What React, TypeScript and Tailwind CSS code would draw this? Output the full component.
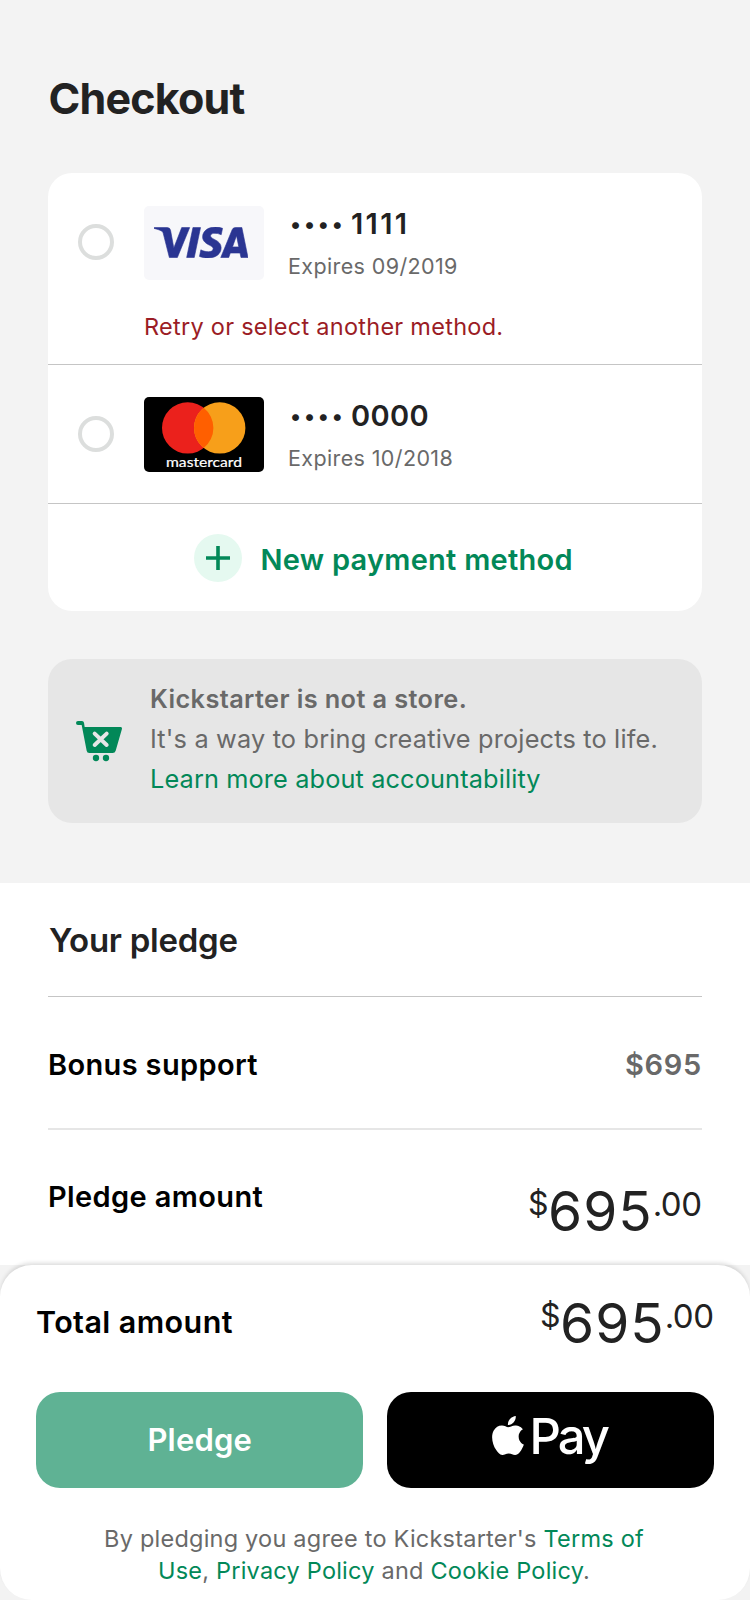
import type { ReactNode } from "react";

function VisaCard() {
  return (
    <div className="flex h-[74px] w-[120px] shrink-0 items-center rounded-[5px] bg-[#f7f7fa] pl-[10px]">
      <svg className="mt-[-1px] h-[31px] w-[94px]" viewBox="0 8.12 24 7.76" preserveAspectRatio="none" fill="#2a3592">
        <path d="M9.112 8.262L5.97 15.758H3.92L2.374 9.775c-.094-.368-.175-.503-.461-.658C1.447 8.864.677 8.627 0 8.479l.046-.217h3.3a.904.904 0 01.894.764l.817 4.338 2.018-5.102zm8.033 5.049c.008-1.979-2.736-2.088-2.717-2.972.006-.269.262-.555.822-.628a3.66 3.66 0 011.913.336l.34-1.59a5.207 5.207 0 00-1.814-.333c-1.917 0-3.266 1.02-3.278 2.479-.012 1.079.963 1.68 1.698 2.04.756.367 1.01.603 1.006.931-.005.504-.602.725-1.16.734-.975.015-1.54-.263-1.992-.473l-.351 1.642c.453.208 1.289.39 2.156.398 2.037 0 3.37-1.006 3.377-2.564m5.061 2.447H24l-1.565-7.496h-1.656a.883.883 0 00-.826.55l-2.909 6.946h2.036l.405-1.12h2.488zm-2.163-2.656l1.02-2.815.588 2.815zm-8.16-4.84l-1.603 7.496H8.34l1.605-7.496z" stroke="#2a3592" strokeWidth="0.15" />
      </svg>
    </div>
  );
}

function MasterCard() {
  return (
    <svg className="mb-px h-[75px] w-[120px] shrink-0" viewBox="0 0 120 75">
      <rect width="120" height="75" rx="5" fill="#000" />
      <circle cx="43.7" cy="30.9" r="25.7" fill="#eb211c" />
      <circle cx="75.7" cy="30.9" r="25.7" fill="#f79f1a" />
      <path d="M59.7 10.8a25.7 25.7 0 0 1 0 40.2a25.7 25.7 0 0 1 0-40.2z" fill="#ff5f00" />
      <text x="22" y="69.5" textLength="76" lengthAdjust="spacingAndGlyphs" fontFamily="Lato" fontWeight="400" fontSize="14" fill="#fff" stroke="#fff" strokeWidth="0.2">
        mastercard
      </text>
    </svg>
  );
}

function CartIcon() {
  return (
    <svg className="h-[42px] w-12 shrink-0" viewBox="30 60 144 126" fill="#028858">
      <path d="M39 63H51q5 0 6 5l2 13H167q5 0 4 5L152 152q-2 7-9 7H73q-7 0-8-7L50 75H39q-6 0-6-6t6-6z" />
      <circle cx="93" cy="174" r="9.5" />
      <circle cx="123" cy="174" r="9.5" />
      <path d="M89 101L125 135M125 101L89 135" stroke="#e6e6e6" strokeWidth="12" strokeLinecap="round" />
    </svg>
  );
}

function AppleLogo() {
  return (
    <svg className="h-[39px] w-8 shrink-0" viewBox="2.2 0 19.6 24" fill="#fff">
      <path d="M12.152 6.896c-.948 0-2.415-1.078-3.96-1.04-2.04.027-3.91 1.183-4.961 3.014-2.117 3.675-.546 9.103 1.519 12.09 1.013 1.454 2.208 3.09 3.792 3.039 1.52-.065 2.09-.987 3.935-.987 1.831 0 2.35.987 3.96.948 1.637-.026 2.676-1.48 3.676-2.948 1.156-1.688 1.636-3.325 1.662-3.415-.039-.013-3.182-1.221-3.22-4.857-.026-3.04 2.48-4.494 2.597-4.559-1.429-2.09-3.623-2.324-4.39-2.376-2-.156-3.675 1.09-4.61 1.09zM15.53 3.83c.843-1.012 1.4-2.427 1.245-3.83-1.207.052-2.662.805-3.532 1.818-.78.896-1.454 2.338-1.273 3.714 1.338.104 2.715-.688 3.559-1.701" />
    </svg>
  );
}

function PaymentRow({ card, number, expires }: { card: ReactNode; number: ReactNode; expires: string }) {
  return (
    <div className="flex h-[75px] items-center pl-[30px]">
      <span className="mb-0.5 size-9 shrink-0 rounded-full border-4 border-[#dcdedd]" />
      <span className="ml-[30px] flex">{card}</span>
      <div className="mt-[2.4px] ml-6">
        <div className="flex h-[42.4px] items-center text-[29px] leading-[42px] font-semibold text-[#222]">
          <span className="ml-0.5 w-[61px] text-[22px] tracking-[2.8px]">••••</span>
          {number}
        </div>
        <div className="mt-px text-[21.5px] leading-[40px] tracking-[0.38px] text-[#696969]">{expires}</div>
      </div>
    </div>
  );
}

function Amount() {
  return (
    <div className="flex text-[#222]">
      <span className="pt-[5px] text-[32px] leading-[40px] tracking-[-0.5px]">$</span>
      <span className="text-[55px] leading-[64px] tracking-[1px]">695</span>
      <span className="pt-[5px] pr-[0.5px] text-[33px] leading-[40px] tracking-[-0.5px]">.00</span>
    </div>
  );
}

export default function App() {
  return (
    <div className="flex h-[1600px] w-[750px] flex-col overflow-hidden bg-[#f3f3f3] font-['Inter',sans-serif]">
      <header className="h-[173px] shrink-0 pt-[76px] pl-[48.5px]">
        <h1 className="text-[43px] leading-[44px] font-bold tracking-[-0.8px] text-[#222]">Checkout</h1>
      </header>

      <section className="mx-12 h-[438px] shrink-0 rounded-[24px] bg-white">
        <div className="h-[192px] border-b border-[#c5c5c5] pt-[32.5px]">
          <PaymentRow card={<VisaCard />} number={<span className="tracking-[2.3px]">1111</span>} expires="Expires 09/2019" />
          <p className="mt-[26.5px] pl-24 text-[23.5px] leading-[40px] tracking-[0.27px] text-[#9b1c25]">Retry or select another method.</p>
        </div>
        <div className="h-[139px] border-b border-[#c5c5c5] pt-[32.5px]">
          <PaymentRow card={<MasterCard />} number={<span className="tracking-[0.4px]">0000</span>} expires="Expires 10/2018" />
        </div>
        <button className="flex h-[107px] w-full items-center pl-[146px]">
          <span className="flex size-12 items-center justify-center rounded-full bg-[#e5f9f0]">
            <svg className="size-6" viewBox="0 0 24 24" stroke="#028858" strokeWidth="3.6">
              <path d="M0 12H24M12 0V24" />
            </svg>
          </span>
          <span className="mt-1 ml-[18.5px] text-[29px] leading-[40px] font-semibold tracking-[0.26px] text-[#028858]">New payment method</span>
        </button>
      </section>

      <section className="mx-12 mt-12 flex h-[164px] shrink-0 items-center rounded-[24px] bg-[#e6e6e6] pl-[27px]">
        <CartIcon />
        <div className="mb-1 ml-[27px] text-[25.3px] leading-[40px] tracking-[0.18px] whitespace-nowrap text-[#696969]">
          <p className="font-semibold tracking-[0.4px]">Kickstarter is not a store.</p>
          <p>It's a way to bring creative projects to life.</p>
          <p className="tracking-[0.13px] text-[#028858]">Learn more about accountability</p>
        </div>
      </section>

      <section className="mt-[60px] h-[382px] shrink-0 bg-white px-12">
        <h2 className="h-[114px] border-b border-[#c5c5c5] pt-[37px] pl-px text-[33px] leading-[40px] font-semibold tracking-[-0.25px] text-[#222]">Your pledge</h2>
        <div className="flex h-[133px] items-center justify-between border-b-2 border-[#e6e6e6] pt-[5px] text-[29px] leading-[40px] font-semibold">
          <span className="tracking-[0.35px]">Bonus support</span>
          <span className="tracking-[0.7px] text-[#696969]">$695</span>
        </div>
        <div className="flex justify-between pt-[47px]">
          <span className="text-[29px] leading-[40px] font-semibold tracking-[0.38px]">Pledge amount</span>
          <div className="mt-0.5">
            <Amount />
          </div>
        </div>
      </section>

      <footer className="relative h-[335px] shrink-0 rounded-[32px] bg-white px-9 shadow-[0_-3px_4px_-1px_rgba(0,0,0,0.14)]">
        <div className="flex h-[102px] justify-between pt-[26px]">
          <span className="mt-[11px] text-[30.5px] leading-[40px] font-semibold tracking-[0.4px]">Total amount</span>
          <Amount />
        </div>
        <div className="mt-[25px] flex gap-6">
          <button className="h-24 flex-1 rounded-[24px] bg-[#5fb294] pl-px text-[31px] leading-[40px] font-semibold tracking-[0.2px] text-white">Pledge</button>
          <button className="flex h-24 flex-1 items-start justify-center rounded-[24px] bg-black pr-0.5 text-white">
            <span className="mt-6">
              <AppleLogo />
            </span>
            <span className="mt-[15px] ml-1.5 text-[49px] leading-[60px] font-medium tracking-[-3px]">Pay</span>
          </button>
        </div>
        <p className="mt-[35px] pr-0.5 text-center text-[23.5px] leading-[32px] tracking-[0.22px] text-[#696969]">
          By pledging you agree to Kickstarter's <a className="text-[#028858]">Terms of</a>
          <br />
          <a className="text-[#028858]">Use</a>, <a className="text-[#028858]">Privacy Policy</a> and <a className="text-[#028858]">Cookie Policy</a>.
        </p>
      </footer>
    </div>
  );
}
